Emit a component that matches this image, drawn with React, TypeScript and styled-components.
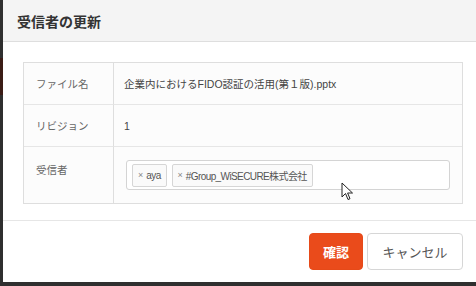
import React from 'react';
import styled, { createGlobalStyle } from 'styled-components';

const GlobalStyle = createGlobalStyle`
  html, body {
    margin: 0;
    padding: 0;
    width: 476px;
    height: 286px;
    overflow: hidden;
    background: linear-gradient(
      to bottom,
      #2f2f2f 0,
      #2f2f2f 58px,
      #3b1c16 58px,
      #3b1c16 95px,
      #2f2f2f 95px
    );
    font-family: "Liberation Sans", "Noto Sans CJK JP", sans-serif;
  }
`;

const Dialog = styled.div`
  position: relative;
  margin-left: 3px;
  width: 480px;
  height: 282px;
  background: #fff;
  display: flex;
  flex-direction: column;
`;

const Header = styled.div`
  height: 42px;
  box-sizing: border-box;
  padding: 0 14px;
  display: flex;
  align-items: center;
  background: #f4f4f4;
  border-bottom: 1px solid #dedede;
  font-family: "Noto Sans CJK JP", sans-serif;
  font-weight: bold;
  font-size: 14px;
  color: #333;
`;

const Body = styled.div`
  padding: 20px 20px 16px;
  border-bottom: 1px solid #e6e6e6;
`;

const Table = styled.div`
  display: grid;
  grid-template-columns: 90px 1fr;
  border: 1px solid #dedede;
  background: #fcfcfc;
`;

const Cell = styled.div<{ $label?: boolean; $tall?: boolean; $last?: boolean }>`
  box-sizing: border-box;
  height: ${({ $tall }) => ($tall ? '56px' : '42px')};
  display: flex;
  align-items: ${({ $label, $tall }) => ($label && $tall ? 'flex-start' : 'center')};
  padding: ${({ $label, $tall }) =>
    $label ? ($tall ? '15px 12px 0' : '0 12px') : $tall ? '0 12px' : '0 10px'};
  border-right: ${({ $label }) => ($label ? '1px solid #dedede' : 'none')};
  border-bottom: ${({ $last }) => ($last ? 'none' : '1px solid #e6e6e6')};
  font-family: "Liberation Sans", "Noto Sans CJK JP", sans-serif;
  font-size: 10.5px;
  color: ${({ $label }) => ($label ? '#666' : '#444')};
  white-space: nowrap;
`;

const TagInput = styled.div`
  flex: 1;
  height: 30px;
  box-sizing: border-box;
  border: 1px solid #d4d4d4;
  border-radius: 3px;
  background: #fff;
  display: flex;
  align-items: center;
  gap: 5px;
  padding: 0 5px;
`;

const Tag = styled.span`
  height: 23px;
  box-sizing: border-box;
  display: inline-flex;
  align-items: center;
  gap: 3px;
  padding: 0 5px;
  border: 1px solid #d6d6d6;
  border-radius: 2px;
  background: #fafafa;
  font-family: "Liberation Sans", "Noto Sans CJK JP", sans-serif;
  font-size: 10px;
  letter-spacing: -0.6px;
  color: #555;
`;

const TagX = styled.span`
  font-size: 9px;
  letter-spacing: 0;
  color: #888;
`;

const Footer = styled.div`
  display: flex;
  justify-content: flex-end;
  gap: 4px;
  padding: 12px 20px 0;
`;

const Button = styled.button<{ $primary?: boolean }>`
  height: 37px;
  width: ${({ $primary }) => ($primary ? '54px' : '96px')};
  box-sizing: border-box;
  padding: 0;
  border-radius: 4px;
  border: 1px solid ${({ $primary }) => ($primary ? '#e64a19' : '#d6d6d6')};
  background: ${({ $primary }) => ($primary ? '#ea4b1b' : '#fff')};
  color: ${({ $primary }) => ($primary ? '#fff' : '#555')};
  font-family: "Noto Sans CJK JP", sans-serif;
  font-weight: ${({ $primary }) => ($primary ? 'bold' : 'normal')};
  font-size: 13px;
`;

const Cursor = styled.svg`
  position: absolute;
  left: 338px;
  top: 182px;
`;

export default function App() {
  return (
    <>
      <GlobalStyle />
      <Dialog>
        <Header>受信者の更新</Header>
        <Body>
          <Table>
            <Cell $label>ファイル名</Cell>
            <Cell>企業内におけるFIDO認証の活用(第１版).pptx</Cell>
            <Cell $label>リビジョン</Cell>
            <Cell>1</Cell>
            <Cell $label $tall $last>受信者</Cell>
            <Cell $tall $last>
              <TagInput>
                <Tag><TagX>×</TagX>aya</Tag>
                <Tag><TagX>×</TagX>#Group_WiSECURE株式会社</Tag>
              </TagInput>
            </Cell>
          </Table>
        </Body>
        <Footer>
          <Button $primary>確認</Button>
          <Button>キャンセル</Button>
        </Footer>
        <Cursor width="14" height="20" viewBox="0 0 14 20">
          <path d="M1 1 L1 15 L4.5 11.5 L7 17.5 L9 16.7 L6.6 11 L11.5 11 Z" fill="#fff" stroke="#222" strokeWidth="1" strokeLinejoin="round" />
        </Cursor>
      </Dialog>
    </>
  );
}
